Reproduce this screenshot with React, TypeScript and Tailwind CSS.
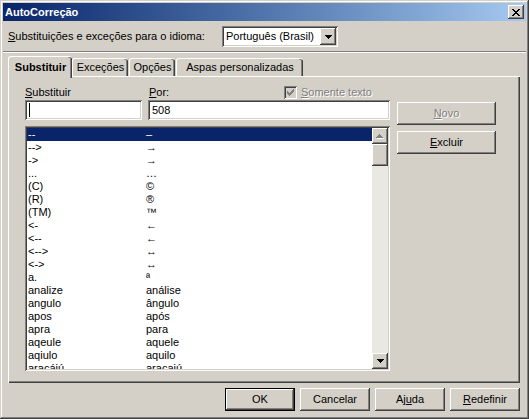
import React from "react";

const raised =
  "shadow-[inset_-1px_-1px_#404040,inset_1px_1px_#ffffff,inset_-2px_-2px_#808080,inset_2px_2px_#d4d0c8]";
const sunken =
  "shadow-[inset_1px_1px_#808080,inset_-1px_-1px_#ffffff,inset_2px_2px_#404040,inset_-2px_-2px_#d4d0c8]";
const disabledText = "text-[#808080] [text-shadow:1px_1px_0_#ffffff]";

const rows: [string, string][] = [
  ["--", "–"],
  ["-->", "→"],
  ["->", "→"],
  ["...", "…"],
  ["(C)", "©"],
  ["(R)", "®"],
  ["(TM)", "™"],
  ["<-", "←"],
  ["<--", "←"],
  ["<-->", "↔"],
  ["<->", "↔"],
  ["a.", "ª"],
  ["analize", "análise"],
  ["angulo", "ângulo"],
  ["apos", "após"],
  ["apra", "para"],
  ["aqeule", "aquele"],
  ["aqiulo", "aquilo"],
  ["aracájú", "aracajú"],
];

function CloseGlyph() {
  const px = [
    "XX....XX",
    ".XX..XX.",
    "..XXXX..",
    "...XX...",
    "..XXXX..",
    ".XX..XX.",
    "XX....XX",
  ];
  return (
    <svg width="8" height="7" viewBox="0 0 8 7" shapeRendering="crispEdges">
      {px.flatMap((r, y) =>
        r.split("").map((c, x) =>
          c === "X" ? <rect key={`${x}-${y}`} x={x} y={y} width="1" height="1" fill="#000" /> : null
        )
      )}
    </svg>
  );
}

function DownArrow({ color = "#000" }: { color?: string }) {
  return (
    <svg width="7" height="4" viewBox="0 0 7 4" shapeRendering="crispEdges">
      <rect x="0" y="0" width="7" height="1" fill={color} />
      <rect x="1" y="1" width="5" height="1" fill={color} />
      <rect x="2" y="2" width="3" height="1" fill={color} />
      <rect x="3" y="3" width="1" height="1" fill={color} />
    </svg>
  );
}

function UpArrowDisabled() {
  return (
    <svg width="8" height="5" viewBox="0 0 8 5" shapeRendering="crispEdges">
      <rect x="4" y="1" width="1" height="1" fill="#fff" />
      <rect x="5" y="2" width="1" height="1" fill="#fff" />
      <rect x="6" y="3" width="1" height="1" fill="#fff" />
      <rect x="1" y="4" width="7" height="1" fill="#fff" />
      <rect x="3" y="0" width="1" height="1" fill="#808080" />
      <rect x="2" y="1" width="3" height="1" fill="#808080" />
      <rect x="1" y="2" width="5" height="1" fill="#808080" />
      <rect x="0" y="3" width="7" height="1" fill="#808080" />
    </svg>
  );
}

export default function App() {
  return (
    <div
      className={`w-[529px] h-[419px] bg-[#d4d0c8] p-[3px] flex flex-col text-[11px] leading-[13px] text-black font-['Liberation_Sans',Arial,sans-serif] shadow-[inset_-1px_-1px_#404040,inset_1px_1px_#d4d0c8,inset_-2px_-2px_#808080,inset_2px_2px_#ffffff]`}
    >
      {/* Title bar */}
      <div className="h-[18px] flex items-center justify-between pl-[2px] pr-[2px] bg-linear-to-r from-[#0a246a] to-[#a6caf0]">
        <span className="text-white font-bold text-[11px] whitespace-nowrap">AutoCorreção</span>
        <div className={`w-[16px] h-[14px] bg-[#d4d0c8] ${raised} flex items-center justify-center`}>
          <CloseGlyph />
        </div>
      </div>

      {/* Language row */}
      <div className="flex items-center mt-[5px] h-[21px] pl-[5px]">
        <span className="w-[214px] whitespace-nowrap">
          <u>S</u>ubstituições e exceções para o idioma:
        </span>
        <div className={`w-[116px] h-[21px] bg-white ${sunken} flex items-center p-[2px]`}>
          <span className="flex-1 pl-[2px] whitespace-nowrap">Português (Brasil)</span>
          <div className={`w-[16px] h-[17px] bg-[#d4d0c8] ${raised} flex items-center justify-center`}>
            <DownArrow />
          </div>
        </div>
      </div>

      {/* Separator */}
      <div className="mt-[4px] h-px bg-[#808080]" />
      <div className="h-px bg-white" />

      {/* Tabs */}
      <div className="flex items-end ml-[5px] h-[20px] mt-[3px] relative z-10">
        <div className="w-[64px] h-[22px] mb-[-2px] bg-[#d4d0c8] border-t border-l border-white rounded-tl-[3px] rounded-tr-[3px] shadow-[inset_-1px_0_#404040,inset_-2px_0_#808080] flex items-center justify-center font-bold whitespace-nowrap">
          Substituir
        </div>
        <div className="w-[56px] h-[18px] bg-[#d4d0c8] border-t border-l border-white rounded-tl-[3px] rounded-tr-[3px] shadow-[inset_-1px_0_#404040,inset_-2px_0_#808080] flex items-center justify-center whitespace-nowrap">
          Exceções
        </div>
        <div className="ml-[1px] w-[46px] h-[18px] bg-[#d4d0c8] border-t border-l border-white rounded-tl-[3px] rounded-tr-[3px] shadow-[inset_-1px_0_#404040,inset_-2px_0_#808080] flex items-center justify-center whitespace-nowrap">
          Opções
        </div>
        <div className="ml-[1px] w-[127px] h-[18px] bg-[#d4d0c8] border-t border-l border-white rounded-tl-[3px] rounded-tr-[3px] shadow-[inset_-1px_0_#404040,inset_-2px_0_#808080] flex items-center justify-center whitespace-nowrap">
          Aspas personalizadas
        </div>
      </div>

      {/* Panel */}
      <div className="ml-[5px] w-[512px] h-[307px] border-t border-l border-white shadow-[inset_-1px_-1px_#404040,inset_-2px_-2px_#808080] flex pt-[9px] pl-[16px]">
        <div className="flex flex-col w-[365px]">
          <div className="flex h-[13px] items-center">
            <span className="w-[124px] whitespace-nowrap">
              <u>S</u>ubstituir
            </span>
            <span className="w-[135px] whitespace-nowrap">
              <u>P</u>or:
            </span>
            <div className="flex items-center -mt-px">
              <div className={`w-[13px] h-[13px] bg-[#d4d0c8] ${sunken} flex items-center justify-center`}>
                <svg width="7" height="7" viewBox="0 0 7 7" shapeRendering="crispEdges">
                  <path d="M0 2h1v1h1v1h1v-1h1v-1h1v-1h1v-1h1v3h-1v1h-1v1h-1v1h-1v1h-1v-1h-1v-1h-1z" fill="#808080" />
                </svg>
              </div>
              <span className={`ml-[4px] whitespace-nowrap ${disabledText}`}>
                <u>S</u>omente texto
              </span>
            </div>
          </div>

          <div className="flex mt-[1px] gap-[6px]">
            <div className={`w-[117px] h-[20px] bg-white ${sunken} flex items-center pl-[4px]`}>
              <div className="w-[1px] h-[14px] bg-black" />
            </div>
            <div className={`w-[242px] h-[20px] bg-white ${sunken} flex items-center pl-[4px]`}>
              508
            </div>
          </div>

          <div className={`mt-[6px] w-[365px] h-[245px] bg-white ${sunken} p-[2px] flex`}>
            <div className="flex-1 flex flex-col overflow-hidden">
              {rows.map(([a, b], i) => (
                <div
                  key={i}
                  className={`flex h-[13px] shrink-0 leading-[13px] whitespace-nowrap ${
                    i === 0 ? "bg-[#0a246a] text-white" : ""
                  }`}
                >
                  <span className="w-[119px] pl-[1px]">{a}</span>
                  <span>{b}</span>
                </div>
              ))}
            </div>
            <div className="w-[16px] flex flex-col bg-[#eae8e3]">
              <div className={`h-[16px] bg-[#d4d0c8] ${raised} flex items-center justify-center`}>
                <UpArrowDisabled />
              </div>
              <div className={`h-[22px] bg-[#d4d0c8] ${raised}`} />
              <div className="flex-1" />
              <div className={`h-[16px] bg-[#d4d0c8] ${raised} flex items-center justify-center`}>
                <DownArrow />
              </div>
            </div>
          </div>
        </div>

        <div className="ml-[7px] pt-[16px] flex flex-col gap-[6px]">
          <div className={`w-[99px] h-[23px] bg-[#d4d0c8] ${raised} flex items-center justify-center ${disabledText}`}>
            <span>
              <u>N</u>ovo
            </span>
          </div>
          <div className={`w-[99px] h-[23px] bg-[#d4d0c8] ${raised} flex items-center justify-center`}>
            <span>
              <u>E</u>xcluir
            </span>
          </div>
        </div>
      </div>

      {/* Bottom buttons */}
      <div className="flex justify-end gap-[5px] pr-[6px] mt-[5px]">
        <div className={`w-[70px] h-[23px] bg-[#d4d0c8] border border-black ${raised} flex items-center justify-center`}>
          OK
        </div>
        <div className={`w-[70px] h-[23px] bg-[#d4d0c8] ${raised} flex items-center justify-center`}>
          Cancelar
        </div>
        <div className={`w-[70px] h-[23px] bg-[#d4d0c8] ${raised} flex items-center justify-center`}>
          <span>
            Aj<u>u</u>da
          </span>
        </div>
        <div className={`w-[70px] h-[23px] bg-[#d4d0c8] ${raised} flex items-center justify-center`}>
          <span>
            <u>R</u>edefinir
          </span>
        </div>
      </div>
    </div>
  );
}
